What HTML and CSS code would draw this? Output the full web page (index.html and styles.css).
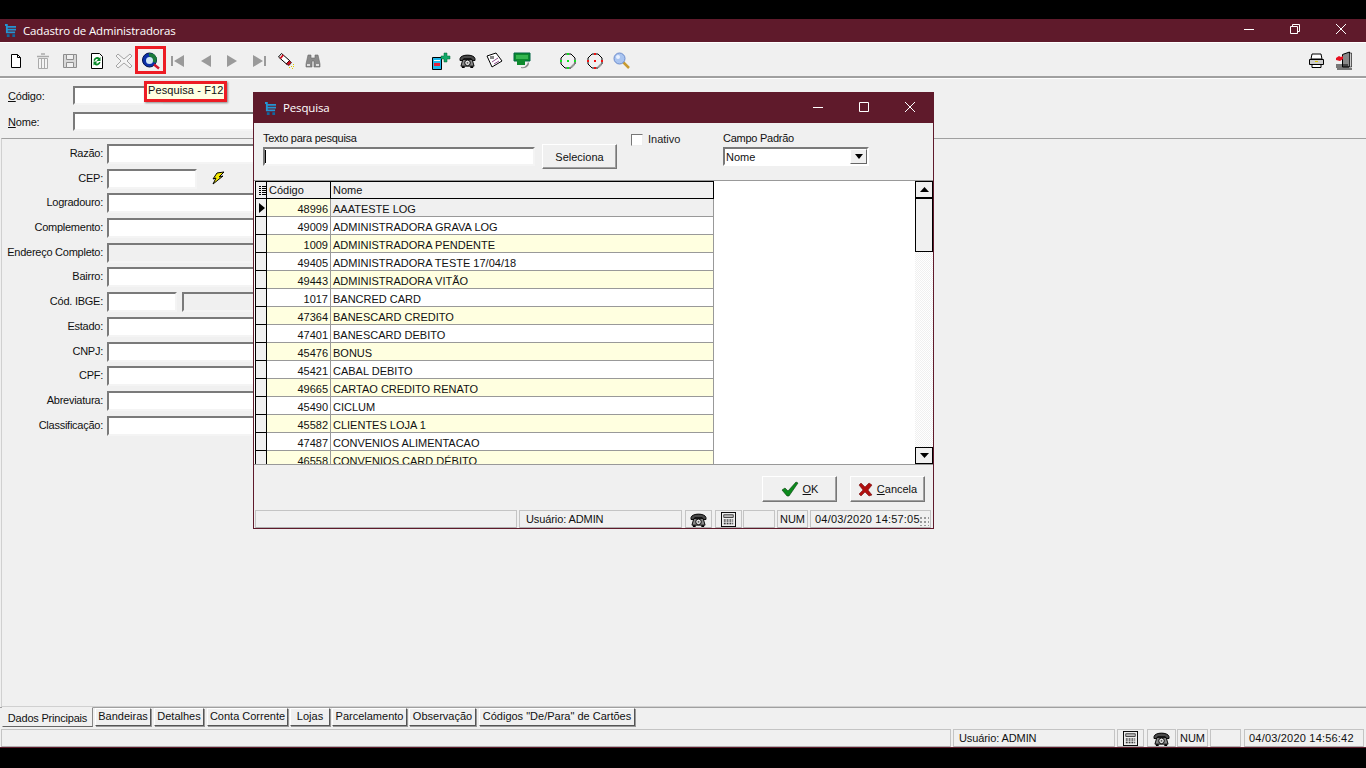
FILE: index.html
```html
<!DOCTYPE html>
<html lang="pt-BR">
<head>
<meta charset="utf-8">
<title>Cadastro de Administradoras</title>
<link rel="stylesheet" href="styles.css">
</head>
<body>
<svg class="defs" width="0" height="0">
  <defs>
    <symbol id="cart" viewBox="0 0 12 14">
      <path d="M0 0h3v2h9v2H3v1h9v2H3v1h8v2H1V2H0z" fill="#2494d2"/>
      <path d="M2 11h3v3H2zM8 11h3v3H8z" fill="#12669e"/>
    </symbol>
    <symbol id="phone" viewBox="0 0 18 16">
      <path d="M1 6C2 1 16 1 17 6v2h-4V6H5v2H1z" fill="#4a4a4a" stroke="#000"/>
      <path d="M4 7h10l2 7H2z" fill="#8a8a8a" stroke="#000"/>
      <circle cx="9" cy="10.500" r="3" fill="#e4e4e4" stroke="#000"/>
      <circle cx="9" cy="10.500" r="1" fill="#555"/>
      <path d="M3 14h3v2H3zM12 14h3v2h-3z"/>
    </symbol>
    <symbol id="calc" viewBox="0 0 16 16">
      <rect x=".5" y=".5" width="15" height="15" fill="#eee" stroke="#000"/>
      <rect x="3" y="3" width="10" height="3" fill="#bbb" stroke="#000" stroke-width=".7"/>
      <path d="M3 8h2v1H3zM6 8h2v1H6zM9 8h2v1H9zM12 8h1v1h-1zM3 10h2v1H3zM6 10h2v1H6zM9 10h2v1H9zM12 10h1v1h-1zM3 12h2v1H3zM6 12h2v1H6zM9 12h2v1H9zM12 12h1v1h-1z"/>
    </symbol>
    <symbol id="point" viewBox="0 0 18 18">
      <path d="M6 2h6l4 4v6l-4 4H6l-4-4V6z" fill="none" stroke="#000"/>
      <path d="M12 15.500 15.500 12" stroke="#999" stroke-width="2"/>
    </symbol>
  </defs>
</svg>

<div class="window">
  <div class="titlebar">
    <svg class="appicon"><use href="#cart"/></svg>
    <span class="title">Cadastro de Administradoras</span>
    <div class="wincontrols">
      <span class="winbtn"><svg width="12" height="12"><path d="M1 6.500h10" stroke="#fff"/></svg></span>
      <span class="winbtn"><svg width="12" height="12"><path d="M1.500 3.500h7v7h-7zM3.500 3.500v-2h7v7h-2" fill="none" stroke="#fff"/></svg></span>
      <span class="winbtn"><svg width="12" height="12"><path d="M1 1l10 10M11 1 1 11" stroke="#fff"/></svg></span>
    </div>
  </div>

  <div class="toolbar">
    <div class="tools">
      <span class="tool"><svg width="14" height="16"><path d="M2.500 1.500h6l3 3v10h-9z" fill="#fff" stroke="#000"/><path d="M8.500 1.500v3h3" fill="none" stroke="#000"/></svg></span>
      <span class="tool"><svg width="16" height="18"><path d="M6 2h4M2 4.500h12" stroke="#aaa" stroke-width="1.500"/><path d="M3.500 6.500h9v10h-9zM6.500 7v9M9.500 7v9" fill="#f4f4f4" stroke="#aaa"/></svg></span>
      <span class="tool"><svg width="16" height="16"><path d="M1.500 1.500h13v13h-13z" fill="#d8d8d8" stroke="#8e8e8e"/><path d="M4.500 1.500h7v5h-7zM4.500 9.500h7v5h-7z" fill="#f0f0f0" stroke="#8e8e8e"/></svg></span>
      <span class="tool"><svg width="14" height="18"><path d="M1.500 1.500h8l3 3v12h-11z" fill="#fff" stroke="#000"/><path d="M3.500 8.500C4 5 8 4 9.500 6l1-1v4h-4l1.500-1.500C7 6.500 5.500 7 5 9zM10.500 10c-.5 3.500-4.500 4.500-6 2.500l-1 1v-4h4L6 11c1 1 2.500.5 3-1z" fill="#0a8a2a"/></svg></span>
      <span class="tool"><svg width="18" height="16"><path d="M3 1l6 5 6-5 2 2-5 5 5 5-2 2-6-5-6 5-2-2 5-5-5-5z" fill="#f4f4f4" stroke="#a4a4a4"/></svg></span>
      <span class="tool"><svg width="19" height="18"><circle cx="8.500" cy="8" r="7" fill="#0b2fa8" stroke="#00104a"/><path d="M8 1l5 1 3 4-1 5-3-1-1-4-3-2z" fill="#1b7a3a"/><circle cx="8.500" cy="8.500" r="3.500" fill="#cfe6f6"/><path d="M13 12.500l5 4" stroke="#d0142c" stroke-width="2.500"/></svg></span>
      <span class="tool"><svg width="14" height="12"><path d="M0 1h2v10H0zM13 0v12L3 6z" fill="#9a9a9a"/></svg></span>
      <span class="tool"><svg width="12" height="12"><path d="M12 0v12L2 6z" fill="#9a9a9a"/></svg></span>
      <span class="tool"><svg width="12" height="12"><path d="M1 0v12l10-6z" fill="#9a9a9a"/></svg></span>
      <span class="tool"><svg width="14" height="12"><path d="M12 1h2v10h-2zM1 0v12l10-6z" fill="#9a9a9a"/></svg></span>
      <span class="tool"><svg width="16" height="16"><path d="M.5 4 3.500.5l8 7-3 3.500z" fill="#fff" stroke="#000"/><path d="M1.500 5l3-3.500 1.500 1-3 3.500z" fill="#d01020"/><path d="M8 11l3.500-3.500 2 2-2.500 3z" fill="#d01020" stroke="#000" stroke-width=".6"/><path d="M13 13h1v1h-1zM11 14h1v1h-1zM15 11h1v1h-1zM14 15h1v1h-1zM15 13h1v1h-1z" fill="#dcc800"/></svg></span>
      <span class="tool"><svg width="16" height="14"><path d="M3 1h3v3h4V1h3l2 9v3H9V7H7v6H1v-3z" fill="#8a8a8a" stroke="#666" stroke-width=".6"/><path d="M2 10h3v2H2zM11 10h3v2h-3z" fill="#ddd"/></svg></span>
    </div>
    <div class="tools tools-b">
      <span class="tool"><svg width="20" height="18"><path d="M1.500 5.500h9v12h-9z" fill="#1fb7ea" stroke="#000"/><path d="M3 8h6v1H3z" fill="#fff"/><path d="M3 11h6v3H3z" fill="#e8203a"/><path d="M13 1h3v3h3v3h-3v3h-3V7h-3V4h3z" fill="#12a868" stroke="#063" stroke-width=".5"/></svg></span>
      <span class="tool"><svg width="17" height="15"><use href="#phone"/></svg></span>
      <span class="tool"><svg width="17" height="17"><path d="M1 4l9-3 6 8-10 6z" fill="#fff" stroke="#000"/><path d="M4 4h4v3H4z" fill="#888"/><path d="M6 10l6-4M8 12l5-3" stroke="#905090"/></svg></span>
      <span class="tool"><svg width="18" height="17"><path d="M1 1h16v8H1z" fill="#0d8a2d" stroke="#064"/><path d="M3 3h12v4H3z" fill="#35b650"/><path d="M4 8h8v5H4z" fill="#0d8a2d"/><path d="M8 15c3 1 6-1 7-5l1 1c0 3-3 6-8 5z" fill="#888"/></svg></span>
    </div>
    <div class="tools tools-c">
      <span class="tool"><svg width="18" height="18"><use href="#point"/><path d="M8 8h2v2H8zM8 1h2v2H8zM8 15h2v2H8zM1 8h2v2H1zM15 8h2v2h-2z" fill="#10e020"/></svg></span>
      <span class="tool"><svg width="18" height="18"><use href="#point"/><path d="M8 8h2v2H8zM8 1h2v2H8zM8 15h2v2H8zM1 8h2v2H1zM15 8h2v2h-2z" fill="#f01010"/></svg></span>
      <span class="tool"><svg width="17" height="17"><path d="M10 10l6 6" stroke="#c89a30" stroke-width="2.500"/><circle cx="6.500" cy="6.500" r="5.500" fill="#a9c4f0" stroke="#6c8ccc"/><circle cx="5" cy="5" r="2" fill="#e8f0ff"/></svg></span>
    </div>
    <div class="tools tools-d">
      <span class="tool"><svg width="17" height="15"><path d="M4 1h9l1 5H3z" fill="#fff" stroke="#000"/><path d="M1.500 6.500h14v5h-14z" fill="#ccc" stroke="#000"/><path d="M4 11.500h9v3H4z" fill="#fff" stroke="#000"/><path d="M7 8h3v1H7z" fill="#e0c800"/></svg></span>
      <span class="tool"><svg width="18" height="20"><path d="M7.500 3.500 14.500 1v15h-7z" fill="#888" stroke="#000"/><path d="M14.500 2h2v14h-2z" fill="#ccc" stroke="#000" stroke-width=".6"/><path d="M1 7l3-2 2 1 2-1v3l-3 2-4-1z" fill="#e81020"/><path d="M1 14h12M1 16h13M2 18h15" stroke="#000"/></svg></span>
    </div>
  </div>

  <div class="codes">
    <div class="code-row">
      <label class="code-label"><u>C</u>ódigo:</label>
      <span class="field field-code"></span>
    </div>
    <div class="code-row">
      <label class="code-label"><u>N</u>ome:</label>
      <span class="field field-name"></span>
    </div>
  </div>

  <div class="panel">
    <div class="form">
      <div class="form-row"><label>Razão:</label><span class="field field-long"></span></div>
      <div class="form-row"><label>CEP:</label><span class="field field-cep"></span>
        <svg class="bolt" width="14" height="14"><path d="M13 1 6 2 2 8l3-1-3 6 10-8-4 1z" fill="#f4e800" stroke="#000"/></svg></div>
      <div class="form-row"><label>Logradouro:</label><span class="field field-long"></span></div>
      <div class="form-row"><label>Complemento:</label><span class="field field-long"></span></div>
      <div class="form-row"><label>Endereço Completo:</label><span class="field field-long field-off"></span></div>
      <div class="form-row"><label>Bairro:</label><span class="field field-long"></span></div>
      <div class="form-row"><label>Cód. IBGE:</label><span class="field field-ibge"></span><span class="field field-city field-off"></span></div>
      <div class="form-row"><label>Estado:</label><span class="field field-long"></span></div>
      <div class="form-row"><label>CNPJ:</label><span class="field field-long"></span></div>
      <div class="form-row"><label>CPF:</label><span class="field field-long"></span></div>
      <div class="form-row"><label>Abreviatura:</label><span class="field field-long"></span></div>
      <div class="form-row"><label>Classificação:</label><span class="field field-long"></span></div>
    </div>
  </div>

  <div class="tabs">
    <span class="tab tab-active">Dados Principais</span>
    <span class="tab tab-bandeiras">Bandeiras</span>
    <span class="tab tab-detalhes">Detalhes</span>
    <span class="tab tab-conta">Conta Corrente</span>
    <span class="tab tab-lojas">Lojas</span>
    <span class="tab tab-parc">Parcelamento</span>
    <span class="tab tab-obs">Observação</span>
    <span class="tab tab-codigos">Códigos "De/Para" de Cartões</span>
  </div>

  <div class="statusbar">
    <span class="cell cell-main"></span>
    <span class="cell cell-user">Usuário: ADMIN</span>
    <span class="cell cell-icon"><svg width="15" height="15"><use href="#calc"/></svg></span>
    <span class="cell cell-icon cell-wide"><svg width="17" height="15"><use href="#phone"/></svg></span>
    <span class="cell cell-num">NUM</span>
    <span class="cell cell-blank"></span>
    <span class="cell cell-date">04/03/2020 14:56:42</span>
  </div>
</div>

<div class="hilite"></div>
<div class="hint">Pesquisa - F12</div>

<div class="dialog">
  <div class="dlg-title">
    <svg class="appicon"><use href="#cart"/></svg>
    <span class="title">Pesquisa</span>
    <div class="wincontrols dlg-controls">
      <span class="winbtn"><svg width="12" height="12"><path d="M1 6.500h10" stroke="#fff"/></svg></span>
      <span class="winbtn"><svg width="12" height="12"><path d="M1.500 1.500h9v9h-9z" fill="none" stroke="#fff"/></svg></span>
      <span class="winbtn"><svg width="12" height="12"><path d="M1 1l10 10M11 1 1 11" stroke="#fff"/></svg></span>
    </div>
  </div>

  <div class="search">
    <div class="search-text">
      <div class="caption">Texto para pesquisa</div>
      <div class="search-line">
        <span class="field field-search"><i class="caret"></i></span>
        <span class="btn btn-sel">Seleciona</span>
      </div>
    </div>
    <label class="check"><span class="checkbox"></span><span class="check-text">Inativo</span></label>
    <div class="search-field">
      <div class="caption">Campo Padrão</div>
      <div class="field combo"><span>Nome</span><span class="combo-btn"><svg width="8" height="5"><path d="M0 0h8L4 5z"/></svg></span></div>
    </div>
  </div>

  <div class="grid-wrap">
    <div class="grid-clip">
      <table class="grid">
        <colgroup><col class="c-ind"><col class="c-code"><col class="c-name"></colgroup>
        <thead><tr><th class="ind"><svg width="7" height="9"><path d="M0 0h2v1H0zM3 0h4v1H3zM0 2h2v1H0zM3 2h4v1H3zM0 4h2v1H0zM3 4h4v1H3zM0 6h2v1H0zM3 6h4v1H3zM0 8h2v1H0zM3 8h4v1H3z"/></svg></th><th>Código</th><th>Nome</th></tr></thead>
        <tbody>
          <tr class="sel"><td class="ind"><svg width="6" height="10"><path d="M0 0l6 5-6 5z"/></svg></td><td class="num">48996</td><td>AAATESTE LOG</td></tr>
          <tr><td class="ind"></td><td class="num">49009</td><td>ADMINISTRADORA GRAVA LOG</td></tr>
          <tr class="alt"><td class="ind"></td><td class="num">1009</td><td>ADMINISTRADORA PENDENTE</td></tr>
          <tr><td class="ind"></td><td class="num">49405</td><td>ADMINISTRADORA TESTE 17/04/18</td></tr>
          <tr class="alt"><td class="ind"></td><td class="num">49443</td><td>ADMINISTRADORA VITÃO</td></tr>
          <tr><td class="ind"></td><td class="num">1017</td><td>BANCRED CARD</td></tr>
          <tr class="alt"><td class="ind"></td><td class="num">47364</td><td>BANESCARD CREDITO</td></tr>
          <tr><td class="ind"></td><td class="num">47401</td><td>BANESCARD DEBITO</td></tr>
          <tr class="alt"><td class="ind"></td><td class="num">45476</td><td>BONUS</td></tr>
          <tr><td class="ind"></td><td class="num">45421</td><td>CABAL DEBITO</td></tr>
          <tr class="alt"><td class="ind"></td><td class="num">49665</td><td>CARTAO CREDITO RENATO</td></tr>
          <tr><td class="ind"></td><td class="num">45490</td><td>CICLUM</td></tr>
          <tr class="alt"><td class="ind"></td><td class="num">45582</td><td>CLIENTES LOJA 1</td></tr>
          <tr><td class="ind"></td><td class="num">47487</td><td>CONVENIOS ALIMENTACAO</td></tr>
          <tr class="alt"><td class="ind"></td><td class="num">46558</td><td>CONVENIOS CARD DÉBITO</td></tr>
        </tbody>
      </table>
    </div>
    <div class="scroll">
      <span class="sb-btn"><svg width="9" height="5"><path d="M4.500 0 9 5H0z"/></svg></span>
      <span class="sb-thumb"></span>
      <span class="sb-track"></span>
      <span class="sb-btn"><svg width="9" height="5"><path d="M0 0h9L4.500 5z"/></svg></span>
    </div>
  </div>

  <div class="actions">
    <span class="btn btn-act"><svg width="18" height="16"><path d="M1 9l3-2 3 3 8-9 2 1-9 13h-2z" fill="#0c8a1c" stroke="#06400e" stroke-width=".6"/></svg><span><u>O</u>K</span></span>
    <span class="btn btn-act"><svg width="15" height="15"><path d="M1 3l2-2 4 4 4-4 3 2-4 5 4 5-3 1-4-4-4 4-2-2 4-4z" fill="#b01010" stroke="#600" stroke-width=".5"/></svg><span><u>C</u>ancela</span></span>
  </div>

  <div class="dlg-status">
    <span class="cell d-main"></span>
    <span class="cell d-user">Usuário: ADMIN</span>
    <span class="cell d-ico"><svg width="17" height="15"><use href="#phone"/></svg></span>
    <span class="cell d-ico"><svg width="15" height="15"><use href="#calc"/></svg></span>
    <span class="cell d-blank"></span>
    <span class="cell d-num">NUM</span>
    <span class="cell d-date">04/03/2020 14:57:05<i class="grip"></i></span>
  </div>
</div>
</body>
</html>
```

FILE: styles.css
```css
* {
  margin: 0;
  padding: 0;
  box-sizing: border-box;
}

html, body {
  width: 1366px;
  height: 768px;
  overflow: hidden;
  background: #000;
}

body {
  font: 11px "Liberation Sans", Arial, sans-serif;
  color: #111;
  padding-top: 19px;
}

.defs {
  position: absolute;
}

.window {
  height: 729px;
  display: flex;
  flex-direction: column;
  background: #f0f0f0;
  border-bottom: 1px solid #5f1a2b;
}

.titlebar {
  height: 23px;
  flex: none;
  background: #5f1a2b;
  color: #fff;
  display: flex;
  align-items: center;
}

.appicon {
  width: 11px;
  height: 13px;
  margin-left: 5px;
  flex: none;
}

.title {
  margin-left: 7px;
  font: 11.5px "Open Sans", sans-serif;
  letter-spacing: -0.15px;
}

.wincontrols {
  margin-left: auto;
  margin-right: 2px;
  margin-bottom: 3px;
  display: flex;
}

.winbtn {
  width: 46px;
  display: flex;
  justify-content: center;
  align-items: center;
}

.toolbar {
  height: 36px;
  flex: none;
  display: flex;
  align-items: center;
  padding: 2px 0 0 2px;
  border-top: 1px solid #fff;
  border-bottom: 2px solid #a0a0a0;
}

.tools {
  display: flex;
}

.tool {
  width: 27px;
  height: 24px;
  display: flex;
  align-items: center;
  justify-content: center;
}

.tools-b {
  margin-left: 101px;
}

.tools-c {
  margin-left: 19px;
}

.tools-d {
  margin-left: auto;
  margin-right: 9px;
}

.codes {
  height: 60px;
  flex: none;
  padding-top: 7px;
  border-top: 1px solid #fff;
}

.code-row {
  height: 26px;
  display: flex;
  align-items: flex-start;
}

.code-label {
  width: 73px;
  padding: 4px 0 0 8px;
  flex: none;
  letter-spacing: -0.2px;
}

.field {
  display: block;
  height: 20px;
  background: #fff;
  border: 2px solid;
  border-color: #7a7a7a #f4f4f4 #f4f4f4 #7a7a7a;
  flex: none;
}

.code-row .field {
  height: 19px;
}

.field-code {
  width: 90px;
}

.field-name {
  width: 400px;
}

.panel {
  flex: 1;
  border: 1px solid #d0d0d0;
  border-top-color: #a0a0a0;
  border-right: 0;
  margin-left: 1px;
  padding-top: 5px;
}

.form-row {
  height: 24.7px;
  display: flex;
  align-items: flex-start;
}

.form-row label {
  width: 101px;
  padding-top: 3px;
  text-align: right;
  white-space: nowrap;
  flex: none;
  letter-spacing: -0.25px;
}

.field-long {
  margin-left: 4px;
  width: 400px;
}

.field-cep {
  margin-left: 4px;
  width: 90px;
}

.field-ibge {
  margin-left: 4px;
  width: 70px;
}

.field-city {
  margin-left: 5px;
  width: 300px;
}

.field-off {
  background: #f0f0f0;
}

.bolt {
  margin: 2px 0 0 14px;
}

.tabs {
  height: 21px;
  flex: none;
  display: flex;
  align-items: flex-start;
  padding-left: 2px;
  border-top: 1px solid #a0a0a0;
}

.tab {
  height: 18px;
  line-height: 15px;
  text-align: center;
  background: #f0f0f0;
  white-space: nowrap;
  border: 1px solid;
  border-color: #fff #555 #555 #fff;
  box-shadow: 1px 1px 0 #999;
}

.tab-active {
  width: 91px;
  height: 20px;
  line-height: 20px;
  margin-top: -1px;
  border-color: #f0f0f0 #888 #666 #f0f0f0;
  box-shadow: none;
  letter-spacing: -0.2px;
}

.tab-bandeiras { width: 56px; margin-left: 2px; }
.tab-detalhes { width: 50px; margin-left: 3px; }
.tab-conta { width: 81px; margin-left: 3px; }
.tab-lojas { width: 40px; margin-left: 2px; }
.tab-parc { width: 75px; margin-left: 2px; }
.tab-obs { width: 67px; margin-left: 2px; }
.tab-codigos { width: 156px; margin-left: 3px; }

.statusbar {
  height: 18px;
  flex: none;
  display: flex;
  padding-left: 1px;
  margin-top: 1px;
}

.cell {
  height: 18px;
  line-height: 16px;
  border: 1px solid;
  border-color: #c4c4c4 #c4c4c4 #b0b0b0 #c4c4c4;
  white-space: nowrap;
  flex: none;
}

.cell-main { width: 950px; }
.cell-user { width: 162px; margin-left: 2px; padding-left: 5px; letter-spacing: -0.1px; }
.cell-icon { width: 27px; margin-left: 2px; display: flex; align-items: center; justify-content: center; }
.cell-wide { width: 29px; margin-left: 3px; }
.cell-num { width: 31px; margin-left: 1px; text-align: center; }
.cell-blank { width: 31px; margin-left: 2px; }
.cell-date { width: 120px; margin-left: 3px; padding-left: 4px; letter-spacing: 0.2px; }

.hilite {
  position: absolute;
  left: 135px;
  top: 46px;
  width: 31px;
  height: 28px;
  border: 3px solid #ed1c24;
}

.hint {
  position: absolute;
  left: 144px;
  top: 81px;
  width: 83px;
  height: 21px;
  line-height: 13px;
  padding-left: 1px;
  background: #ffffe1;
  border: 3px solid #ed1c24;
  box-shadow: 1px 1px 2px #888;
  white-space: nowrap;
  letter-spacing: 0.1px;
}

.dialog {
  position: absolute;
  left: 253px;
  top: 92px;
  width: 681px;
  height: 437px;
  background: #f0f0f0;
  border: 1px solid #5f1a2b;
  display: flex;
  flex-direction: column;
}

.dlg-title {
  height: 30px;
  flex: none;
  background: #5f1a2b;
  color: #fff;
  display: flex;
  align-items: center;
}

.dlg-title .appicon {
  margin-left: 11px;
}

.dlg-title .title {
  margin: 0 0 2px 7px;
}

.dlg-controls {
  margin-right: 0;
}

.search {
  height: 57px;
  flex: none;
  display: flex;
  padding: 9px 0 0 9px;
}

.caption {
  letter-spacing: -0.25px;
}

.search-line {
  display: flex;
  align-items: flex-start;
  margin-top: 3px;
}

.field-search {
  width: 272px;
  height: 19px;
  position: relative;
}

.caret {
  position: absolute;
  left: 0;
  top: 1px;
  width: 1px;
  height: 13px;
  background: #000;
}

.btn {
  display: flex;
  align-items: center;
  justify-content: center;
  background: #f0f0f0;
  border: 1px solid;
  border-color: #fff #777 #777 #fff;
  box-shadow: inset -1px -1px 0 #a0a0a0;
  flex: none;
}

.btn-sel {
  width: 75px;
  height: 25px;
  margin: -3px 0 0 7px;
  padding-top: 1px;
}

.check {
  display: flex;
  align-items: center;
  width: 92px;
  height: 12px;
  margin: 2px 0 0 14px;
  gap: 5px;
  color: #222;
  flex: none;
}

.check-text {
  margin-bottom: 3px;
}

.checkbox {
  width: 12px;
  height: 12px;
  background: #fff;
  border: 1px solid;
  border-color: #777 #eee #eee #777;
}

.combo {
  width: 146px;
  height: 19px;
  margin-top: 3px;
  display: flex;
  justify-content: space-between;
  line-height: 17px;
  padding-left: 1px;
  border-color: #7a7a7a #fff #fff #7a7a7a;
}

.combo-btn {
  width: 17px;
  height: 15px;
  background: #f0f0f0;
  border: 1px solid;
  border-color: #fff #666 #666 #fff;
  display: flex;
  align-items: center;
  justify-content: center;
}

.grid-wrap {
  height: 285px;
  flex: none;
  display: flex;
  background: #fff;
  border-top: 1px solid #999;
  border-bottom: 1px solid #999;
  padding-left: 1px;
}

.grid-clip {
  width: 660px;
  height: 283px;
  overflow: hidden;
}

.grid {
  width: 459px;
  table-layout: fixed;
  border-collapse: separate;
  border-spacing: 0;
}

.c-ind { width: 12px; }
.c-code { width: 64px; }

.grid th, .grid td {
  height: 18px;
  padding: 2px 2px 0;
  font-weight: normal;
  text-align: left;
  white-space: nowrap;
  overflow: hidden;
  border-right: 1px solid #999;
  border-bottom: 1px solid #999;
}

.grid th {
  padding-top: 0;
  background: #f0f0f0;
  border-top: 1px solid #000;
  border-right-color: #000;
  border-bottom-color: #000;
}

.grid th:first-child, .grid td.ind {
  padding: 0 0 0 3px;
  background: #f0f0f0;
  border-left: 1px solid #000;
  border-right-color: #000;
  border-bottom-color: #000;
  line-height: 0;
}

.grid .num {
  text-align: right;
}

.grid .alt td {
  background: #ffffe0;
}

.grid .alt td.ind {
  background: #f0f0f0;
}

.grid .sel td {
  background: #f0f0f0;
}

.grid .sel td.num {
  background: #ffffe0;
}

.scroll {
  width: 18px;
  margin-left: 1px;
  display: flex;
  flex-direction: column;
  background: repeating-conic-gradient(#fff 0 25%, #f0f0f0 0 50%) 0 0 / 2px 2px;
}

.sb-btn {
  height: 17px;
  flex: none;
  background: #f0f0f0;
  border: 1px solid #000;
  display: flex;
  align-items: center;
  justify-content: center;
}

.sb-thumb {
  height: 54px;
  flex: none;
  background: #f0f0f0;
  border: 1px solid #000;
}

.sb-track {
  flex: 1;
}

.actions {
  height: 45px;
  flex: none;
  display: flex;
  justify-content: flex-end;
  gap: 13px;
  padding: 11px 8px 0 0;
}

.btn-act {
  width: 75px;
  height: 26px;
  gap: 4px;
}

.dlg-status {
  display: flex;
  padding-left: 1px;
}

.d-main { width: 262px; }
.d-user { width: 163px; margin-left: 2px; padding-left: 6px; letter-spacing: -0.1px; }
.d-ico { width: 27px; margin-left: 3px; display: flex; align-items: center; justify-content: center; }
.d-blank { width: 32px; margin-left: 1px; }
.d-num { width: 31px; margin-left: 2px; text-align: center; }
.d-date { width: 121px; margin-left: 2px; padding-left: 4px; letter-spacing: 0.2px; position: relative; }

.grip {
  position: absolute;
  right: 1px;
  bottom: 1px;
  width: 10px;
  height: 10px;
  background: radial-gradient(#999 1px, transparent 1px) 0 0 / 4px 4px;
}
```
